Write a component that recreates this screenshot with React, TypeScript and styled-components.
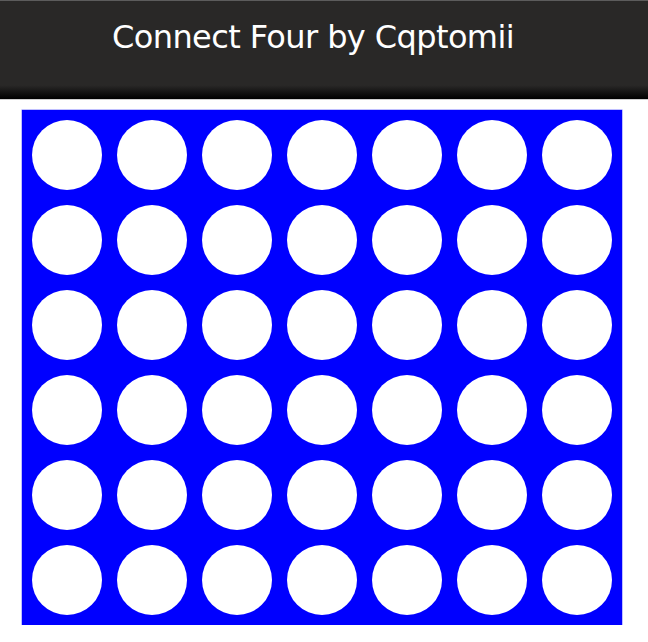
import React from "react";
import styled, { createGlobalStyle } from "styled-components";

const Global = createGlobalStyle`
  html, body { margin: 0; padding: 0; background: #ffffff; }
  body { font-family: "DejaVu Sans", Verdana, sans-serif; }
`;

const Page = styled.div`
  width: 648px;
  display: flex;
  flex-direction: column;
`;

const Header = styled.header`
  height: 98px;
  border-top: 1px solid #5c5c5c;
  border-bottom: 1px solid #cfcfcf;
  background: linear-gradient(to bottom, #292827 0%, #292827 86%, #000000 100%);
  display: flex;
  align-items: flex-start;
`;

const Title = styled.h1`
  margin: 0;
  padding: 16px 0 0 112px;
  font-family: "DejaVu Sans", Verdana, sans-serif;
  font-weight: normal;
  font-size: 32px;
  letter-spacing: -0.6px;
  line-height: 40px;
  color: #ffffff;
`;

const Board = styled.div`
  margin: 10px 0 0 22px;
  width: 600px;
  box-sizing: border-box;
  padding: 10px;
  background: #0000ff;
  display: grid;
  grid-template-columns: repeat(7, 70px);
  grid-auto-rows: 70px;
  gap: 15px;
  box-shadow: 0 0 0 0.5px #8080ff;
`;

const Cell = styled.div<{ $color?: string }>`
  width: 70px;
  height: 70px;
  border-radius: 50%;
  background: ${(p) => p.$color ?? "#ffffff"};
`;

const ROWS = 6;
const COLS = 7;

export default function App() {
  const cells = Array.from({ length: ROWS * COLS }, (_, i) => i);
  return (
    <Page>
      <Global />
      <Header>
        <Title>Connect Four by Cqptomii</Title>
      </Header>
      <Board>
        {cells.map((i) => (
          <Cell key={i} />
        ))}
      </Board>
    </Page>
  );
}
